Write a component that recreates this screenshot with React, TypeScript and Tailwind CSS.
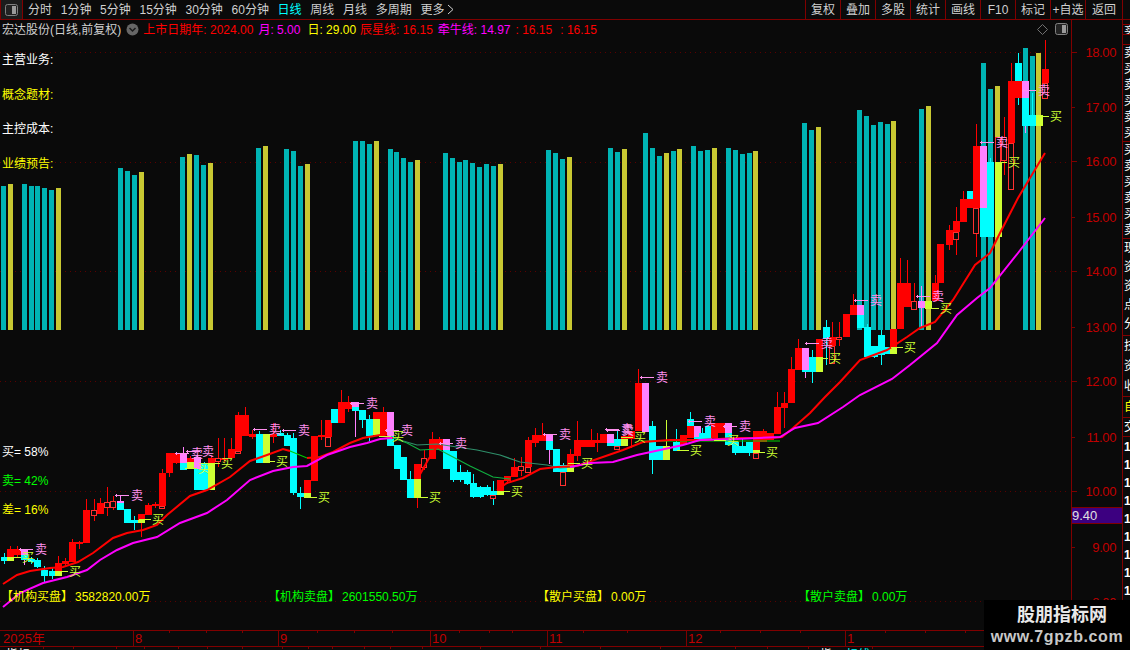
import React from "react";

const LINE = "#800000";

const leftTabs = ["分时", "1分钟", "5分钟", "15分钟", "30分钟", "60分钟", "日线", "周线", "月线", "多周期", "更多"];
const rightTabs = ["复权", "叠加", "多股", "统计", "画线", "F10", "标记", "+自选"];

// [left x, top y, colour]
const bars: [number, number, string][] = [
  [1, 186, "t"], [8, 184, "y"], [22, 184, "t"], [29, 186, "t"], [35, 186, "t"], [42, 188, "t"], [49, 190, "t"], [56, 188, "y"],
  [118, 168, "t"], [125, 171, "t"], [132, 175, "t"], [139, 172, "y"],
  [180, 157, "t"], [187, 154, "y"], [194, 155, "t"], [201, 165, "t"], [208, 163, "y"],
  [256, 148, "t"], [263, 146, "y"],
  [284, 149, "t"], [291, 151, "t"], [298, 166, "t"], [305, 164, "y"],
  [353, 141, "t"], [360, 141, "t"], [367, 144, "t"], [374, 141, "y"],
  [388, 149, "t"], [394, 152, "t"], [401, 158, "t"], [408, 162, "t"], [415, 160, "y"],
  [443, 153, "t"], [450, 158, "t"], [457, 162, "t"], [463, 160, "t"], [470, 163, "t"], [477, 167, "t"], [484, 164, "t"], [491, 166, "t"], [498, 164, "y"],
  [546, 150, "t"], [553, 153, "t"], [560, 159, "t"], [567, 157, "y"],
  [608, 148, "t"], [615, 152, "t"], [622, 149, "y"],
  [643, 133, "t"], [650, 148, "t"], [657, 156, "t"], [664, 153, "y"], [671, 151, "t"], [677, 149, "y"],
  [691, 146, "t"], [698, 151, "t"], [705, 150, "t"], [712, 148, "y"],
  [726, 148, "t"], [733, 150, "t"], [740, 154, "t"], [747, 153, "t"], [753, 151, "y"],
  [802, 123, "t"], [809, 130, "t"], [816, 127, "y"],
  [857, 110, "t"], [864, 116, "t"], [871, 125, "t"], [878, 122, "t"], [885, 124, "t"], [891, 121, "y"],
  [919, 109, "t"], [926, 106, "y"],
  [981, 63, "t"], [988, 89, "t"], [995, 86, "y"],
  [1023, 48, "t"], [1030, 56, "t"], [1036, 53, "y"],
];

// centre x, wick high, wick low, body pieces: r red, c cyan, p pink, y lime, h hollow
const candles: [number, number, number, string][] = [
  [4, 553, 564, "c557,561"], [10, 546, 561, "r549,557 y557,561"], [17, 546, 558, "r549,555"], [24, 549, 565, "p549,555 c555,560"],
  [31, 557, 564, "c559,562"], [37, 558, 568, "c560,567"], [44, 566, 583, "c570,576"], [52, 568, 579, "c571,576"],
  [58, 556, 576, "r563,571 y571,576"], [65, 558, 566, "r561,564"], [72, 539, 562, "r542,562"], [79, 541, 549, "r542,544"],
  [86, 499, 543, "r510,543"], [94, 499, 521, "h510,515"], [100, 498, 514, "r503,514"], [107, 487, 516, "h502,507"], [113, 496, 510, "h501,507"],
  [120, 496, 510, "p501,503 c503,510"], [127, 509, 523, "c509,523"], [134, 516, 530, "c520,523"], [141, 514, 537, "r514,520 y520,523"],
  [148, 503, 515, "r505,515"], [155, 502, 508, "r504,506"], [162, 469, 509, "r473,506 h506,508"], [169, 453, 477, "r453,473"],
  [176, 452, 464, "r453,463"], [183, 447, 470, "p453,463 c463,470"], [190, 456, 469, "r458,462 y462,469"], [197, 455, 490, "p457,469 c469,490"],
  [204, 462, 490, "c463,490"], [211, 456, 490, "r458,463 y463,490"], [218, 438, 467, "h458,461"], [224, 438, 462, "r458,460"], [231, 438, 458, "r449,458"],
  [238, 412, 453, "r415,451 h451,453"], [245, 407, 436, "r415,436"], [252, 430, 439, "r434,437"], [259, 431, 463, "c434,463"], [266, 434, 463, "y434,463"],
  [273, 423, 443, "r434,437"], [280, 430, 436, "c433,436"], [287, 433, 446, "c435,446"], [293, 433, 495, "c438,493"], [300, 487, 509, "c493,497"],
  [307, 480, 498, "r480,493 y493,498"], [314, 436, 481, "r436,481"], [321, 420, 440, "r435,437"], [328, 420, 446, "r420,437 h437,446"], [334, 409, 423, "c409,423"],
  [341, 390, 423, "r402,423"], [348, 396, 412, "r402,409"],
  [355, 402, 437, "p402,407 c407,411"], [362, 410, 428, "c410,420"], [369, 415, 441, "c419,436"], [376, 412, 435, "r412,419 y419,435"], [383, 407, 435, "r412,435"],
  [390, 412, 436, "p412,436"], [390, 436, 446, "c436,446"], [397, 445, 460, "c445,469"], [403, 457, 480, "c457,480"], [410, 471, 498, "c479,498"],
  [417, 464, 508, "r464,479 y479,498"], [424, 450, 470, "h458,467"], [432, 432, 459, "r439,459"], [439, 437, 450, "r439,450"], [446, 439, 469, "p439,450 c450,469"],
  [453, 451, 482, "c451,480"], [460, 465, 482, "c472,480"], [467, 470, 485, "c472,484"], [473, 474, 498, "c483,497"], [480, 486, 498, "c487,497"], [487, 485, 496, "c487,495"],
  [493, 481, 505, "c491,495 h495,498"], [500, 480, 495, "r480,491 y491,495"], [507, 476, 484, "r476,481"], [514, 458, 477, "r467,477"], [521, 457, 476, "h466,470"],
  [528, 437, 472, "r440,467 h467,472"], [535, 428, 447, "r435,443"], [542, 423, 441, "r435,441"], [549, 435, 464, "p435,441 c441,450"], [556, 449, 472, "c449,472"],
  [563, 463, 485, "c465,472 h472,485"], [570, 449, 472, "r454,465 y465,472"], [577, 421, 461, "r440,456"], [584, 440, 447, "r440,447"], [591, 429, 447, "r440,447"],
  [597, 433, 452, "r440,443"], [603, 434, 443, "r434,443"], [610, 434, 446, "p434,443 c443,446"], [617, 430, 449, "c439,446 h446,449"], [624, 436, 446, "r436,439 y439,446"],
  [631, 431, 448, "r431,439"], [638, 369, 431, "r383,431"], [645, 383, 432, "p383,432"], [652, 421, 474, "c426,460"], [659, 446, 460, "c446,460"], [666, 420, 460, "y446,460"],
  [676, 429, 451, "c442,451"], [683, 435, 445, "r435,445"], [690, 412, 438, "c419,426 r426,438"], [697, 426, 440, "p426,437 c437,440"], [702, 428, 440, "c433,440"],
  [708, 426, 440, "c426,440"], [714, 423, 438, "r423,438"], [721, 423, 433, "r423,433"], [728, 423, 445, "p423,433 c433,445"], [735, 442, 455, "c442,453"], [742, 439, 453, "c446,453"],
  [749, 442, 456, "c442,453"], [756, 431, 458, "r431,450 y450,453 h453,458"], [763, 429, 442, "r431,442"], [770, 433, 440, "r433,440"],
  [777, 392, 434, "r407,434"], [784, 392, 428, "r403,408"], [791, 357, 403, "r369,403"], [798, 339, 370, "r348,370"], [805, 348, 378, "p348,370 c370,372"],
  [812, 350, 383, "c357,372"], [819, 339, 372, "r339,357 y357,372"], [826, 320, 365, "c327,339"], [832, 322, 363, "r337,346 h346,363"], [839, 322, 346, "h337,339"],
  [846, 314, 337, "r314,337"], [853, 294, 315, "r305,315"], [860, 305, 328, "p305,315 c315,328"], [867, 324, 357, "c327,357"], [874, 346, 358, "c346,357"], [881, 330, 365, "c335,355"],
  [887, 347, 354, "c347,354"], [893, 329, 354, "r329,347 y347,354"], [900, 258, 329, "r283,329"], [907, 260, 307, "r283,307"], [914, 283, 309, "h301,309"],
  [921, 286, 327, "p301,308"], [928, 301, 309, "y301,309"], [935, 275, 301, "r283,301"], [940, 244, 283, "r244,283"], [949, 225, 250, "r230,245"],
  [956, 207, 255, "r221,232 h232,239"], [963, 191, 222, "r199,222"], [970, 191, 208, "c191,199 r199,208"], [976, 124, 257, "r146,208 h208,233"], [983, 146, 237, "p146,208 c208,237"],
  [990, 158, 237, "c162,237"], [998, 137, 237, "h137,162 y162,237"], [1004, 117, 175, "h137,160"], [1011, 63, 189, "r81,143 h143,189"], [1018, 53, 105, "c63,81 r81,98"],
  [1025, 81, 133, "p81,98 c98,126"], [1032, 93, 126, "c115,126"], [1039, 115, 126, "y115,126"], [1045, 40, 98, "r69,83 h83,98"],
];

const sells: [number, number][] = [
  [41, 549], [137, 495], [197, 453], [208, 451], [275, 429], [304, 430], [372, 403], [407, 430], [461, 443], [565, 434],
  [627, 429], [662, 377], [628, 430], [710, 421], [745, 426], [827, 343], [876, 300], [938, 296], [1002, 142], [1044, 90],
];
const buys: [number, number][] = [
  [28, 557], [75, 571], [158, 519], [204, 468], [227, 463], [282, 461], [324, 497], [435, 497], [517, 491], [398, 436],
  [587, 463], [640, 437], [696, 450], [733, 440], [772, 452], [835, 358], [910, 347], [946, 308], [1014, 162], [1056, 116],
];

const redLine = "3,584 17,575 30,571 50,568 63,567 78,562 93,553 113,538 127,533 143,530 157,525 167,515 190,496 207,490 230,477 250,461 267,455 283,449 290,451";
const redLine2 = "307,458 320,457 333,452 350,443 363,438 380,435 393,438";
const redLine3 = "418,478 428,460 438,445";
const redLine4 = "497,490 507,483 523,478 540,469 557,467 577,466 600,458 623,450 643,442 670,440 700,440 737,438 772,438 782,437 793,428 810,413 825,397 840,382 860,360 887,350 907,337 920,328 935,322 953,300 975,265 990,253 1000,233 1018,198 1045,153";
const magLine = "3,607 20,593 43,583 67,577 87,570 100,560 117,550 133,543 157,537 180,523 207,513 227,500 250,480 273,471 293,467 307,466 327,455 350,447 367,443 380,439 392,438";
const magLine2 = "570,467 590,463 613,462 637,455 660,450 683,445 700,440 737,439 780,437 795,428 818,423 843,407 860,395 892,379 910,365 937,343 957,315 977,298 990,288 1018,253 1045,218";
const greenLow = "290,451 307,458 320,457";
const greenLow2 = "393,438 407,443 420,450 438,449 453,457 470,466 493,477 510,479";
const greenUp = "393,438 417,445 437,444 477,450 500,455 520,462 547,465 560,468 575,467";
const greenMid = "640,441 780,441";

const pieceColor: Record<string, string> = { r: "#ff0000", c: "#00ffff", p: "#ff80ff", y: "#ccff33", h: "#ff3030" };

const axisLabels: [number, string][] = [
  [52, "18.00"], [107, "17.00"], [161, "16.00"], [217, "15.00"], [271, "14.00"], [327, "13.00"],
  [381, "12.00"], [437, "11.00"], [491, "10.00"], [547, "9.00"], [602, "8.00"],
];

const timeMarks: [number, string][] = [[133, "8"], [278, "9"], [430, "10"], [547, "11"], [686, "12"], [845, "1"]];
const timeTicks = [169, 206, 242, 317, 354, 392, 459, 489, 512, 583, 627, 720, 760, 800, 885, 925, 965];
const lowerTicks = [43, 73, 116, 144, 178, 207, 242, 282, 308, 332, 364, 390, 422, 480, 540, 600, 660, 735, 767, 808, 872];

const depth: [number, string, string, string][] = [
  [1, "【机构买盘】", "3582820.00万", "text-[#ffff00]"],
  [268, "【机构卖盘】", "2601550.50万", "text-[#00ff00]"],
  [537, "【散户买盘】", "0.00万", "text-[#ffff00]"],
  [798, "【散户卖盘】", "0.00万", "text-[#00ff00]"],
];

function PanelIcon() {
  return (
    <svg width="13" height="12" viewBox="0 0 13 12">
      <rect x="0.5" y="0.5" width="12" height="11" rx="2" fill="#222" stroke="#808080" />
      <rect x="7" y="2" width="4" height="8" fill="#9a9a9a" />
    </svg>
  );
}

function Candle({ row }: { row: [number, number, number, string] }) {
  const [cx, hi, lo, body] = row;
  const pieces = body.split(" ").map((p) => {
    const [a, b] = p.slice(1).split(",").map(Number);
    return { kind: p[0], a, b };
  });
  return (
    <g>
      <rect x={cx} y={hi} width={1} height={lo - hi} fill={pieceColor[pieces[0].kind === "h" ? "r" : pieces[0].kind]} />
      {pieces.map((p, i) =>
        p.kind === "h" ? (
          <rect key={i} x={cx - 2.5} y={p.a + 0.5} width={5} height={p.b - p.a} fill="#0a0a0a" stroke="#ff3030" />
        ) : (
          <rect key={i} x={cx - 3} y={p.a} width={6.5} height={p.b - p.a} fill={pieceColor[p.kind]} />
        ),
      )}
    </g>
  );
}

function Chart() {
  return (
    <svg className="absolute left-0 top-0" width="1070" height="610" viewBox="0 20 1070 610" shapeRendering="crispEdges">
      {[52, 162, 271, 381, 491, 601].map((y) => (
        <line key={y} x1="0" x2="1070" y1={y + 0.5} y2={y + 0.5} stroke="#5a0000" strokeDasharray="1 4" />
      ))}
      {bars.map(([x, top, kind]) => (
        <rect key={x} x={x} y={top} width={5} height={330 - top} fill={kind === "t" ? "#00b4b4" : "#c8c832"} />
      ))}
      {candles.map((row, i) => (
        <Candle key={i} row={row} />
      ))}
      <g fill="none" shapeRendering="auto">
        <polyline points={greenUp} stroke="#2f8f6a" strokeWidth="1.2" />
        <polyline points={greenLow} stroke="#00d000" strokeWidth="1.2" />
        <polyline points={greenLow2} stroke="#10b040" strokeWidth="1.2" />
        <polyline points={greenMid} stroke="#00d000" strokeWidth="1.2" />
        <polyline points={redLine} stroke="#ff0000" strokeWidth="2" />
        <polyline points={redLine2} stroke="#ff0000" strokeWidth="2" />
        <polyline points={redLine3} stroke="#ff0000" strokeWidth="2" />
        <polyline points={redLine4} stroke="#ff0000" strokeWidth="2" />
        <polyline points={magLine} stroke="#ff00ff" strokeWidth="2" />
        <polyline points={magLine2} stroke="#ff00ff" strokeWidth="2" />
      </g>
      <g fontSize="12" textAnchor="middle">
        {sells.map(([x, y]) => (
          <g key={`${x}-${y}`} fill="#ff90ee">
            <rect x={x - 22} y={y} width={14} height={1} />
            <rect x={x - 21} y={y - 1} width={1} height={3} />
            <text x={x} y={y + 5}>卖</text>
          </g>
        ))}
        {buys.map(([x, y]) => (
          <g key={`${x}-${y}`} fill="#ccff33">
            <rect x={x - 19} y={y} width={12} height={1} />
            <text x={x} y={y + 5}>买</text>
          </g>
        ))}
      </g>
    </svg>
  );
}

function PriceAxis() {
  return (
    <div className="relative w-[51px] shrink-0 border-l border-[#800000]">
      <svg className="absolute left-0 top-0" width="50" height="610" viewBox="1072 20 50 610" shapeRendering="crispEdges">
        {axisLabels.map(([y, label], i) => (
          <g key={label}>
            <rect x={1072} y={y} width={i % 2 === 0 ? 5 : 3} height={1} fill={LINE} />
            <text x={1116} y={y + 5} fontSize="13" letterSpacing="-0.4" textAnchor="end" fill="#c00000">
              {label}
            </text>
          </g>
        ))}
      </svg>
      <div className="absolute left-0 right-0 top-[487px] flex h-[17px] items-center border-y border-[#800000] bg-[#3c0080] text-[13px] text-[#e0e0e0]">
        9.40
      </div>
    </div>
  );
}

function SideStrip() {
  const cell = "flex flex-col overflow-hidden border-b border-[#800000] pl-[1px]";
  return (
    <div className="flex w-[8px] shrink-0 flex-col overflow-hidden border-l border-[#800000] text-[12px] text-white">
      <div className="h-[5px] shrink-0 border-b border-[#800000]" />
      <div className={`${cell} h-[10px] shrink-0 leading-[10px]`}>卖</div>
      <div className="h-[10px] shrink-0 border-b border-[#800000]" />
      <div className={`${cell} h-[97px] shrink-0 leading-[16px]`}>
        {["卖", "买", "卖", "买", "卖", "买"].map((c, i) => (
          <span key={i}>{c}</span>
        ))}
      </div>
      <div className={`${cell} h-[97px] shrink-0 leading-[16px]`}>
        {["买", "卖", "买", "卖", "买", "卖"].map((c, i) => (
          <span key={i}>{c}</span>
        ))}
      </div>
      <div className={`${cell} h-[97px] shrink-0 leading-[19px]`}>
        {["现", "资", "资", "点", "分"].map((c, i) => (
          <span key={i}>{c}</span>
        ))}
      </div>
      <div className={`${cell} h-[61px] shrink-0 leading-[20px]`}>
        {["技", "资", "收"].map((c, i) => (
          <span key={i}>{c}</span>
        ))}
      </div>
      <div className={`${cell} h-[21px] shrink-0 leading-[20px] text-[#ffff00]`}>自</div>
      <div className={`${cell} h-[19px] shrink-0 leading-[18px]`}>交</div>
      <div className="flex flex-col pl-[1px] pt-[1px] font-bold leading-[18px]">
        {Array.from({ length: 9 }).map((_, i) => (
          <span key={i}>1</span>
        ))}
      </div>
    </div>
  );
}

export default function App() {
  return (
    <div className="relative flex h-[650px] w-[1130px] flex-col overflow-hidden bg-[#0a0a0a] text-[12px] [font-family:'Liberation_Sans','Noto_Sans_CJK_SC',sans-serif]">
      {/* toolbar */}
      <div className="flex h-[20px] shrink-0 border-b border-[#800000] text-[#d0d0d0]">
        <div className="flex w-[23px] items-center justify-center border-x border-[#800000] bg-[#1c1c1c]">
          <PanelIcon />
        </div>
        <div className="flex flex-1 items-center gap-[8.7px] pl-[5px]">
          {leftTabs.map((t) => (
            <span key={t} className={t === "日线" ? "text-[#00ffff]" : ""}>
              {t}
            </span>
          ))}
          <svg width="7" height="11" viewBox="0 0 7 11" className="-ml-[6px]">
            <path d="M1 1l5 4.5L1 10" fill="none" stroke="#d0d0d0" />
          </svg>
        </div>
        {rightTabs.map((t) => (
          <div key={t} className="flex w-[35px] items-center justify-center border-l border-[#800000]">
            {t}
          </div>
        ))}
        <div className="flex w-[38px] items-center justify-center border-x border-[#800000]">返回</div>
        <div className="w-[7px]" />
      </div>

      <div className="flex h-[610px] shrink-0">
        {/* chart */}
        <div className="relative w-[1071px] shrink-0">
          <Chart />
          <div className="relative flex h-[19px] items-center whitespace-pre pl-[2px]">
            <span className="text-[#d0d0d0]">宏达股份(日线,前复权)</span>
            <svg width="13" height="13" viewBox="0 0 13 13" className="ml-[5px] mr-[4px]">
              <circle cx="6.5" cy="6.5" r="6" fill="#666" />
              <path d="M3.5 5l3 3 3-3" fill="none" stroke="#1a1a1a" strokeWidth="1.5" />
            </svg>
            <span className="text-[#ff0000]">上市日期年: 2024.00</span>
            <span className="ml-[5px] text-[#ff00ff]">月: 5.00</span>
            <span className="ml-[7px] text-[#ffff00]">日: 29.00</span>
            <span className="ml-[4px] text-[#ff0000]">辰星线: 16.15</span>
            <span className="ml-[5px] text-[#ff00ff]">牵牛线: 14.97</span>
            <span className="ml-[5px] text-[#ff0000]">: 16.15</span>
            <span className="ml-[8px] text-[#ff0000]">: 16.15</span>
            <div className="absolute left-[1037px] top-[3px] flex items-center gap-[7px]">
              <svg width="11" height="11" viewBox="0 0 11 11">
                <path d="M5.5 0.5l5 5-5 5-5-5z" fill="none" stroke="#707070" />
              </svg>
              <PanelIcon />
            </div>
          </div>

          {/* labels over the chart */}
          <div className="absolute left-[2px] top-[31px] flex flex-col gap-[16.7px] leading-[18px]">
            <span className="text-white">主营业务:</span>
            <span className="text-[#ffff00]">概念题材:</span>
            <span className="text-white">主控成本:</span>
            <span className="text-[#ffff00]">业绩预告:</span>
          </div>
          <div className="absolute left-[2px] top-[423px] flex flex-col gap-[11px] leading-[18px]">
            <span className="text-white">买= 58%</span>
            <span className="text-[#00ff00]">卖= 42%</span>
            <span className="text-[#ffff00]">差= 16%</span>
          </div>
          {depth.map(([x, label, value, color]) => (
            <span key={label} style={{ left: x }} className={`absolute top-[568px] whitespace-pre ${color}`}>
              <span>{label}</span>
              <span className="ml-[2px]">{value}</span>
            </span>
          ))}
        </div>
        <PriceAxis />
        <SideStrip />
      </div>

      {/* time axis */}
      <div className="relative h-[17px] shrink-0 border-y border-[#800000] text-[13px] text-[#c00000]">
        <span className="absolute left-[3px] top-0 leading-[16px]">2025年</span>
        {timeMarks.map(([x, label]) => (
          <span key={x} style={{ left: x }} className="absolute top-0 h-[15px] border-l border-[#800000] pl-[1px] leading-[16px]">
            {label}
          </span>
        ))}
        {timeTicks.map((x) => (
          <span key={x} style={{ left: x }} className="absolute top-0 h-[2px] w-px bg-[#800000]" />
        ))}
      </div>
      <div className="relative flex-1 overflow-hidden text-[12px] text-white">
        {lowerTicks.map((x) => (
          <span key={x} style={{ left: x }} className="absolute top-0 h-[2px] w-px bg-[#800000]" />
        ))}
        <span className="absolute left-[6px] top-[2px] leading-[12px]">指标</span>
        <span className="absolute left-[820px] top-[2px] leading-[12px]">指</span>
        <span className="absolute left-[846px] top-[2px] leading-[12px] text-[#00ffff]">标线</span>
      </div>

      {/* watermark */}
      <div className="absolute bottom-0 right-0 flex h-[50px] w-[146px] flex-col items-center bg-black pt-[3px]">
        <span className="pl-[10px] text-[18px] font-bold leading-[24px] text-[#e8e8e8]">股朋指标网</span>
        <span className="text-[16px] font-bold leading-[20px] tracking-[0.6px] text-[#c8c8c8]">www.7gpzb.com</span>
      </div>
    </div>
  );
}
